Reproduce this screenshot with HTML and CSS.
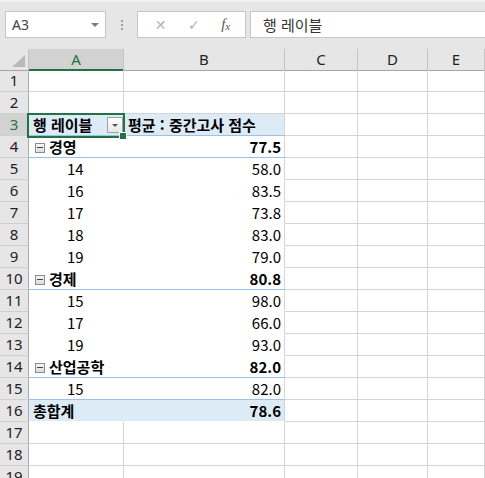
FILE: index.html
```html
<!DOCTYPE html>
<html lang="ko">
<head>
  <meta charset="UTF-8" />
  <title>피벗 테이블</title>
  <link rel="stylesheet" href="styles.css">
</head>
<body>

  <div class="toolbar">
    <div class="namebox">
      <span>A3</span>
      <span class="caret"></span>
    </div>
    <div class="grip"><i></i><i></i><i></i></div>
    <div class="fbtns">
      <span class="fbtn">✕</span>
      <span class="fbtn">✓</span>
      <span class="fbtn fx">f<sub>x</sub></span>
    </div>
    <div class="formula">행 레이블</div>
  </div>

  <div class="sheet">
    <div class="row colhead">
      <div class="corner"><span class="tri"></span></div>
      <div class="ch active">A</div>
      <div class="ch">B</div>
      <div class="ch">C</div>
      <div class="ch">D</div>
      <div class="ch">E</div>
    </div>

    <div class="row"><div class="rh">1</div><div class="c"></div><div class="c"></div><div class="c"></div><div class="c"></div><div class="c"></div></div>
    <div class="row"><div class="rh">2</div><div class="c"></div><div class="c"></div><div class="c"></div><div class="c"></div><div class="c"></div></div>

    <!-- 피벗 영역 -->
    <div class="row"><div class="rh active">3</div>
      <div class="pv head">
        <span class="lbl bold">행 레이블<span class="filter"></span></span>
        <span class="hval bold">평균 : 중간고사 점수</span>
      </div>
      <div class="c"></div><div class="c"></div><div class="c"></div></div>

    <div class="row"><div class="rh">4</div>
      <div class="pv group"><span class="lbl bold"><span class="minus"></span>경영</span><span class="val bold">77.5</span></div>
      <div class="c"></div><div class="c"></div><div class="c"></div></div>
    <div class="row"><div class="rh">5</div>
      <div class="pv"><span class="lbl sub">14</span><span class="val">58.0</span></div>
      <div class="c"></div><div class="c"></div><div class="c"></div></div>
    <div class="row"><div class="rh">6</div>
      <div class="pv"><span class="lbl sub">16</span><span class="val">83.5</span></div>
      <div class="c"></div><div class="c"></div><div class="c"></div></div>
    <div class="row"><div class="rh">7</div>
      <div class="pv"><span class="lbl sub">17</span><span class="val">73.8</span></div>
      <div class="c"></div><div class="c"></div><div class="c"></div></div>
    <div class="row"><div class="rh">8</div>
      <div class="pv"><span class="lbl sub">18</span><span class="val">83.0</span></div>
      <div class="c"></div><div class="c"></div><div class="c"></div></div>
    <div class="row"><div class="rh">9</div>
      <div class="pv"><span class="lbl sub">19</span><span class="val">79.0</span></div>
      <div class="c"></div><div class="c"></div><div class="c"></div></div>

    <div class="row"><div class="rh">10</div>
      <div class="pv group"><span class="lbl bold"><span class="minus"></span>경제</span><span class="val bold">80.8</span></div>
      <div class="c"></div><div class="c"></div><div class="c"></div></div>
    <div class="row"><div class="rh">11</div>
      <div class="pv"><span class="lbl sub">15</span><span class="val">98.0</span></div>
      <div class="c"></div><div class="c"></div><div class="c"></div></div>
    <div class="row"><div class="rh">12</div>
      <div class="pv"><span class="lbl sub">17</span><span class="val">66.0</span></div>
      <div class="c"></div><div class="c"></div><div class="c"></div></div>
    <div class="row"><div class="rh">13</div>
      <div class="pv"><span class="lbl sub">19</span><span class="val">93.0</span></div>
      <div class="c"></div><div class="c"></div><div class="c"></div></div>

    <div class="row"><div class="rh">14</div>
      <div class="pv group"><span class="lbl bold"><span class="minus"></span>산업공학</span><span class="val bold">82.0</span></div>
      <div class="c"></div><div class="c"></div><div class="c"></div></div>
    <div class="row"><div class="rh">15</div>
      <div class="pv group"><span class="lbl sub">15</span><span class="val">82.0</span></div>
      <div class="c"></div><div class="c"></div><div class="c"></div></div>

    <div class="row"><div class="rh">16</div>
      <div class="pv total"><span class="lbl bold">총합계</span><span class="val bold">78.6</span></div>
      <div class="c"></div><div class="c"></div><div class="c"></div></div>

    <div class="row"><div class="rh">17</div><div class="c"></div><div class="c"></div><div class="c"></div><div class="c"></div><div class="c"></div></div>
    <div class="row"><div class="rh">18</div><div class="c"></div><div class="c"></div><div class="c"></div><div class="c"></div><div class="c"></div></div>
    <div class="row"><div class="rh">19</div><div class="c"></div><div class="c"></div><div class="c"></div><div class="c"></div><div class="c"></div></div>

    <!-- 선택 셀 A3 -->
    <div class="selection"><span class="handle"></span></div>
  </div>

</body>
</html>
```

FILE: styles.css
```css
body {
  margin: 0;
  padding: 0;
  background: #ffffff;
  font-family: "Noto Sans CJK KR", "Noto Sans", sans-serif;
  font-size: 15px;
  color: #000;
  overflow: hidden;
}

/* 수식 입력줄 */
.toolbar {
  height: 49px;
  box-sizing: border-box;
  background: #e6e6e6;
  border-top: 2px solid #f0f0f0;
  padding-top: 9px;
  display: flex;
  align-items: flex-start;
}

.namebox {
  margin-left: 5px;
  width: 101px;
  height: 27px;
  box-sizing: border-box;
  background: #fff;
  border: 1px solid #c6c6c6;
  display: flex;
  align-items: center;
  justify-content: space-between;
  padding: 0 6px 0 6px;
  color: #444;
  font-family: "Noto Sans", sans-serif;
  font-size: 14px;
}

.caret {
  width: 0;
  height: 0;
  border-left: 4px solid transparent;
  border-right: 4px solid transparent;
  border-top: 4px solid #7a7a7a;
}

.grip {
  width: 31px;
  height: 27px;
  display: flex;
  flex-direction: column;
  align-items: center;
  justify-content: center;
  gap: 2px;
}

.grip i {
  width: 2px;
  height: 2px;
  background: #a0a0a0;
}

.fbtns {
  width: 109px;
  height: 27px;
  box-sizing: border-box;
  background: #fff;
  border: 1px solid #c6c6c6;
  display: flex;
  align-items: center;
  justify-content: space-around;
  padding: 0 4px 0 6px;
  color: #b4b4b4;
  font-family: "DejaVu Sans", sans-serif;
  font-size: 14px;
}

.fx {
  color: #5a5a5a;
  font-family: "Liberation Serif", serif;
  font-style: italic;
  font-size: 15px;
}

.fx sub {
  font-size: 11px;
  vertical-align: -1px;
}

.formula {
  margin-left: 4px;
  flex: 1;
  height: 27px;
  box-sizing: border-box;
  background: #fff;
  border: 1px solid #c6c6c6;
  border-right: none;
  padding-left: 12px;
  line-height: 25px;
  color: #333;
}

/* 시트 */
.sheet {
  position: relative;
}

.row {
  display: grid;
  grid-template-columns: 29px 95px 161px 73px 70px 1fr;
  height: 22px;
}

.row > div {
  box-sizing: border-box;
  border-right: 1px solid #d4d4d4;
  border-bottom: 1px solid #d4d4d4;
}

.colhead {
  height: 21px;
  background: #e6e6e6;
}

.colhead > div {
  border-right: 1px solid #c4c4c4;
  border-bottom: 1px solid #a6a6a6;
}

.corner {
  position: relative;
}

.tri {
  position: absolute;
  right: 3px;
  bottom: 3px;
  width: 0;
  height: 0;
  border-left: 13px solid transparent;
  border-bottom: 12px solid #b9b9b9;
}

.ch {
  text-align: center;
  font-family: "Noto Sans", sans-serif;
  font-size: 15px;
  line-height: 20px;
  color: #222;
}

.colhead .ch.active {
  background: #d2d2d2;
  color: #217346;
  border-bottom: 2px solid #217346;
}

.rh {
  background: #e6e6e6;
  text-align: center;
  font-family: "Noto Sans", sans-serif;
  font-size: 15px;
  line-height: 21px;
  color: #222;
}

.row > .rh {
  border-right: 1px solid #ababab;
  border-bottom: 1px solid #d0d0d0;
}

.rh.active {
  background: #d2d2d2;
  color: #217346;
}

/* 피벗 테이블 */
.row > .pv {
  grid-column: span 2;
  display: flex;
  align-items: center;
  border-bottom-color: #fff;
  line-height: 21px;
}

.lbl {
  width: 95px;
  flex: none;
  box-sizing: border-box;
  padding-left: 4px;
  display: flex;
  align-items: center;
  white-space: nowrap;
}

.lbl.sub {
  padding-left: 38px;
}

.bold {
  font-weight: bold;
}

.val {
  flex: 1;
  text-align: right;
  padding-right: 3px;
}

.hval {
  flex: 1;
  padding-left: 4px;
  white-space: nowrap;
}

.row > .pv.head {
  background: #ddebf7;
  border-bottom-color: #9bc2e6;
}

.row > .pv.group {
  border-bottom-color: #9bc2e6;
}

.row > .pv.total {
  background: #ddebf7;
}

.filter {
  margin-left: auto;
  margin-right: 1px;
  width: 16px;
  height: 16px;
  box-sizing: border-box;
  border: 1px solid #a2a2a2;
  background: linear-gradient(#ffffff, #e8e8e8);
  position: relative;
}

.filter::after {
  content: "";
  position: absolute;
  left: 4px;
  top: 6px;
  border-left: 3px solid transparent;
  border-right: 3px solid transparent;
  border-top: 3px solid #555;
}

.minus {
  width: 10px;
  height: 10px;
  box-sizing: border-box;
  border: 1px solid #8a8a8a;
  background: linear-gradient(#f6f6f6, #dcdcdc);
  margin: 2px 4px 0 2px;
  position: relative;
}

.minus::after {
  content: "";
  position: absolute;
  left: 1px;
  right: 1px;
  top: 3px;
  height: 1px;
  background: #444;
}

/* 선택 영역 */
.selection {
  position: absolute;
  left: 27px;
  top: 64px;
  width: 98px;
  height: 25px;
  box-sizing: border-box;
  border: 2px solid #217346;
  pointer-events: none;
}

.handle {
  position: absolute;
  right: -4px;
  bottom: -4px;
  width: 6px;
  height: 6px;
  background: #217346;
  border: 1px solid #fff;
}
```
